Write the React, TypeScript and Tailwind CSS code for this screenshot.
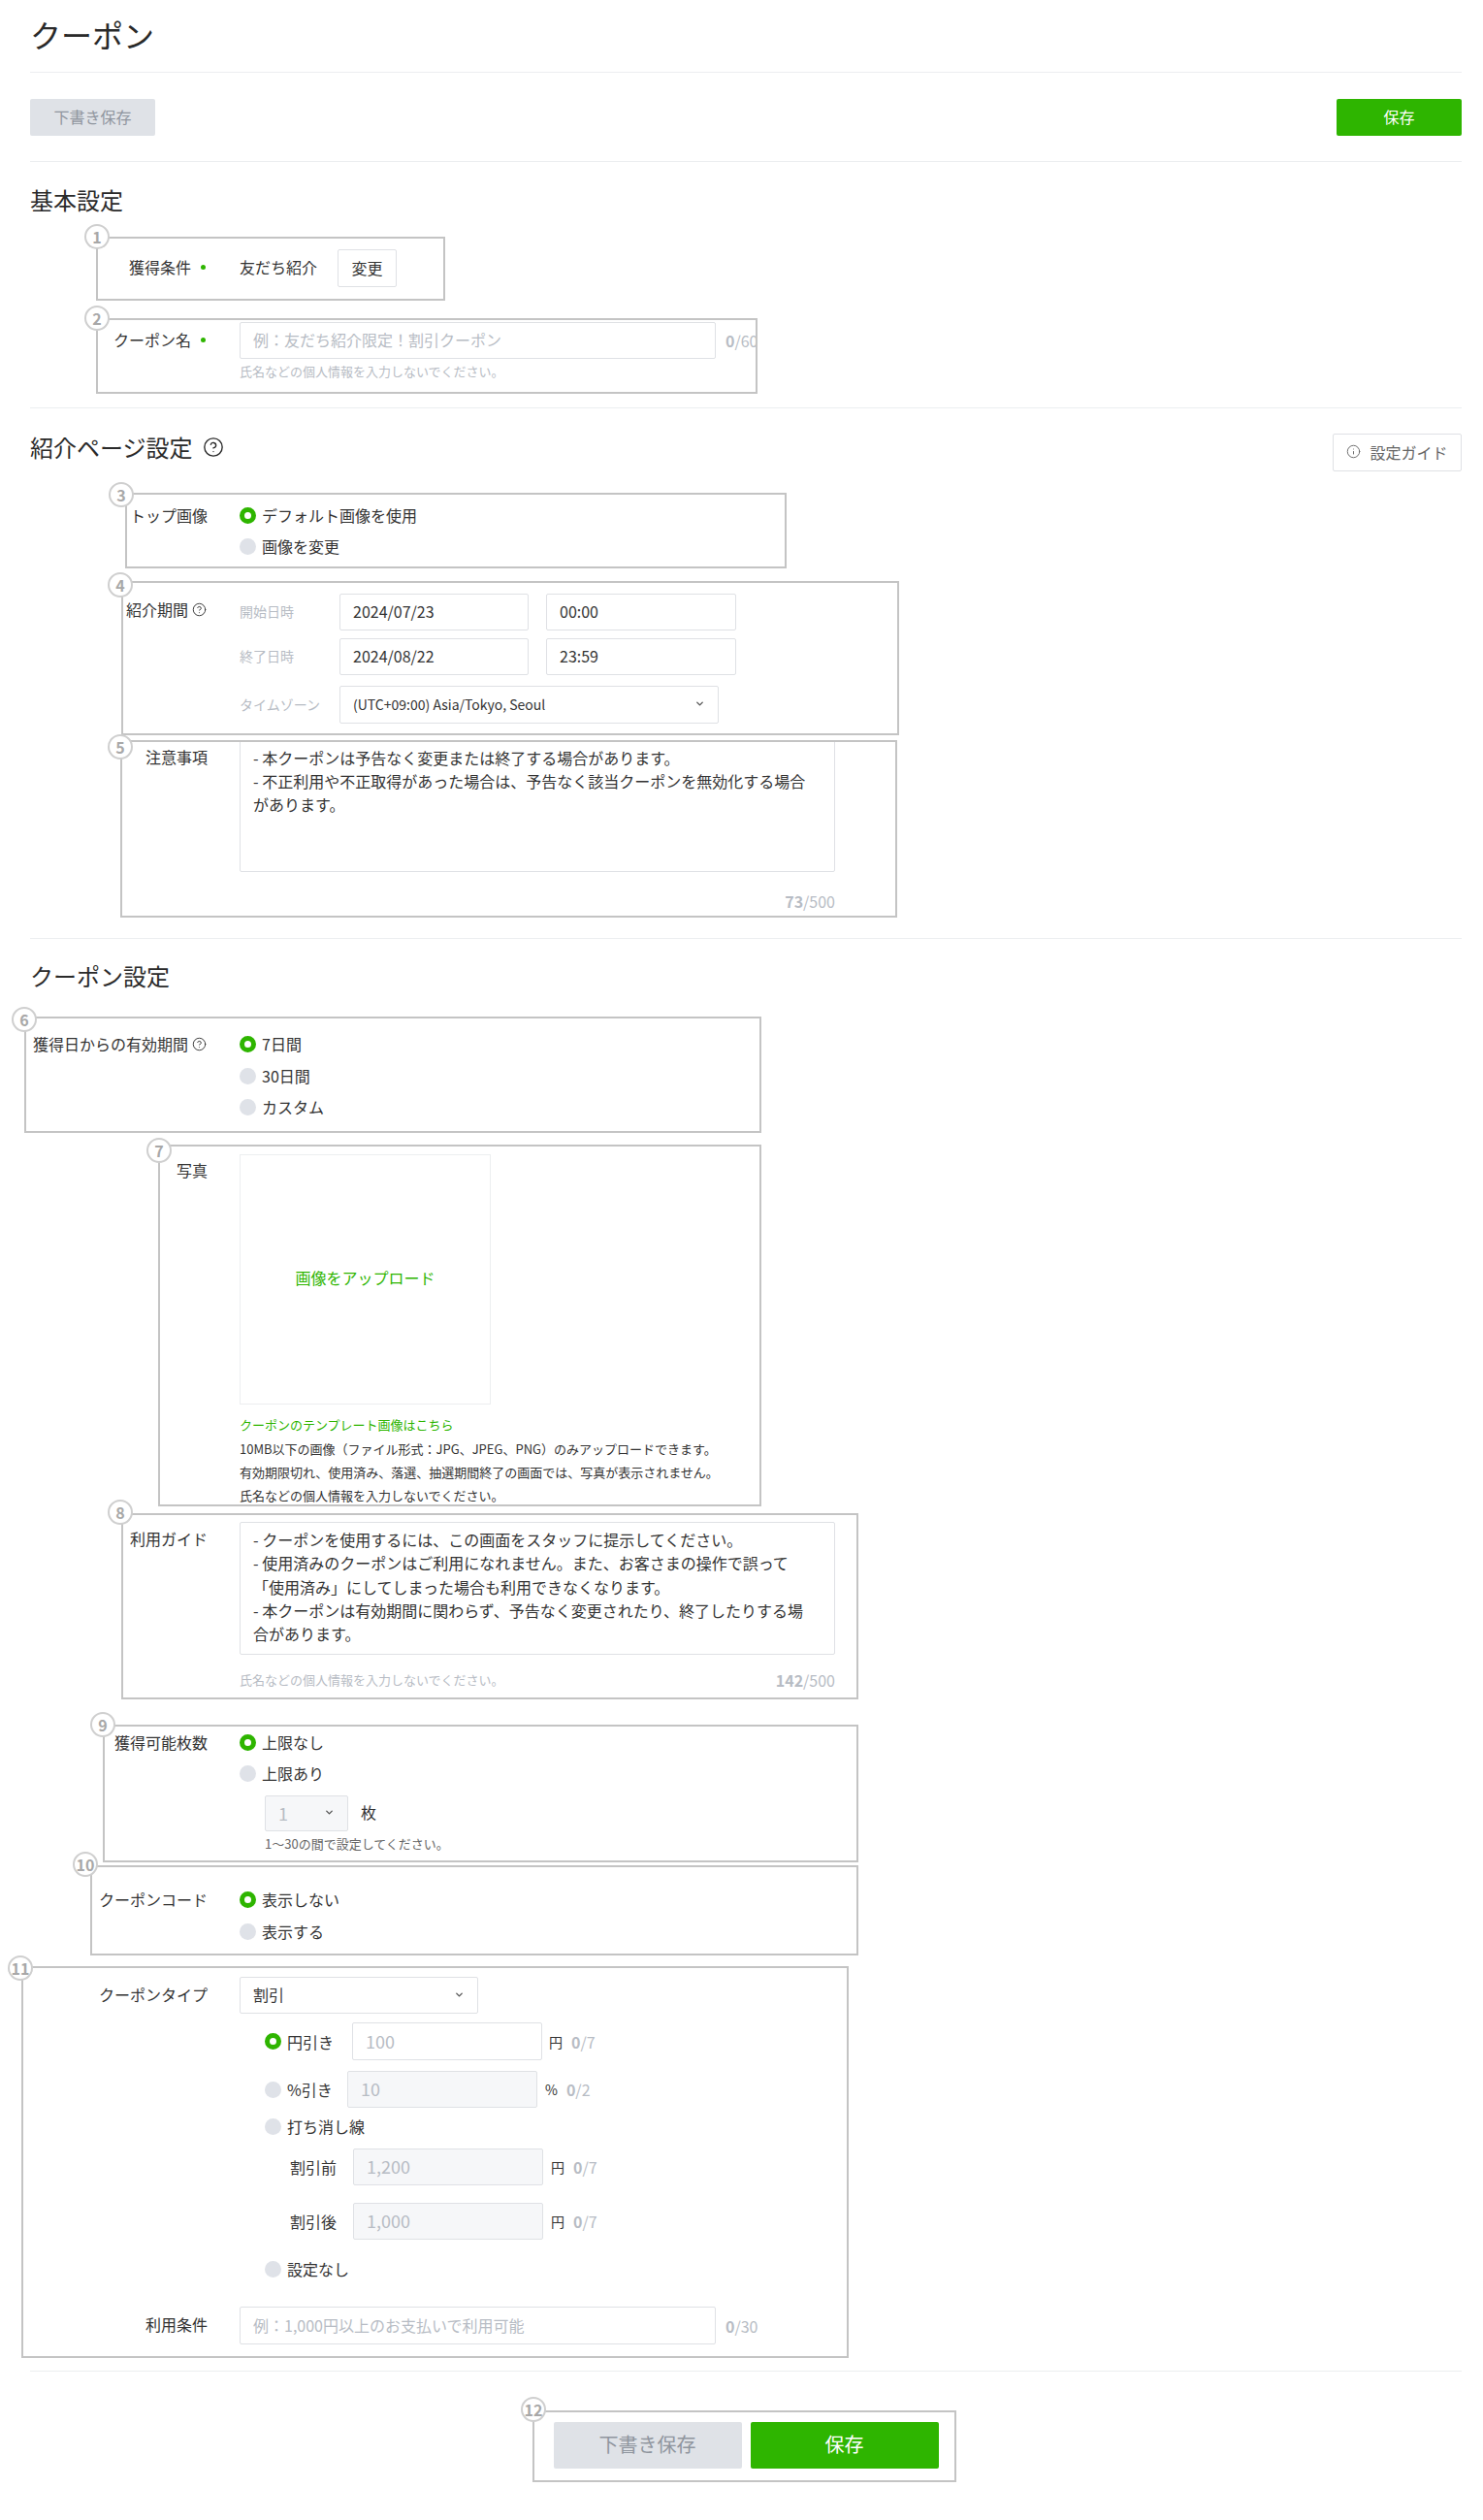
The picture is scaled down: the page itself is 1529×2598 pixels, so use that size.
import React from 'react';
import { ChevronDown, CircleHelp, Info } from 'lucide-react';

const frames = [
  { n: 1, frame: 'left-[99px] top-[244px] w-[360px] h-[66px]', badge: 'left-[87px] top-[231px]' },
  { n: 2, frame: 'left-[99px] top-[328px] w-[682px] h-[78px]', badge: 'left-[87px] top-[315px]' },
  { n: 3, frame: 'left-[129px] top-[508px] w-[682px] h-[78px]', badge: 'left-[112px] top-[497px]' },
  { n: 4, frame: 'left-[125px] top-[599px] w-[802px] h-[159px]', badge: 'left-[111px] top-[590px]' },
  { n: 5, frame: 'left-[124px] top-[763px] w-[801px] h-[183px]', badge: 'left-[111px] top-[757px]' },
  { n: 6, frame: 'left-[25px] top-[1048px] w-[760px] h-[120px]', badge: 'left-[12px] top-[1038px]' },
  { n: 7, frame: 'left-[163px] top-[1180px] w-[622px] h-[373px]', badge: 'left-[151px] top-[1173px]' },
  { n: 8, frame: 'left-[125px] top-[1560px] w-[760px] h-[192px]', badge: 'left-[111px] top-[1546px]' },
  { n: 9, frame: 'left-[106px] top-[1778px] w-[779px] h-[142px]', badge: 'left-[93px] top-[1765px]' },
  { n: 10, frame: 'left-[93px] top-[1923px] w-[792px] h-[93px]', badge: 'left-[75px] top-[1909px]' },
  { n: 11, frame: 'left-[22px] top-[2027px] w-[853px] h-[404px]', badge: 'left-[8px] top-[2016px]' },
  { n: 12, frame: 'left-[549px] top-[2485px] w-[437px] h-[74px]', badge: 'left-[537px] top-[2471px]' },
];

const Divider = ({ className }: { className: string }) => <div className={`h-px bg-[#eceef0] ${className}`} />;

const Heading = ({ children, className }: { children: React.ReactNode; className: string }) => (
  <h2 className={`h-8 text-2xl leading-[30px] text-[#2a2a2a] ${className}`}>{children}</h2>
);

const Dot = () => <span className="ml-[10px] mr-[2px] h-[5px] w-[5px] rounded-full bg-[#2eb500]" />;

const Label = ({ children, className = '' }: { children: React.ReactNode; className?: string }) => (
  <div className={`flex w-[183px] shrink-0 justify-end text-base leading-6 ${className}`}>{children}</div>
);

const Box = ({ children, className, muted }: { children?: React.ReactNode; className: string; muted?: boolean }) => (
  <div
    className={`box-border flex shrink-0 items-center rounded-[2px] border border-[#dfe1e5] px-[13px] pb-[2px] text-base ${
      muted ? 'bg-[#f6f7f9]' : 'bg-white'
    } ${className}`}
  >
    {children}
  </div>
);

const Select = ({ children, className, muted }: { children: React.ReactNode; className: string; muted?: boolean }) => (
  <Box className={`justify-between ${className}`} muted={muted}>
    {children}
    <ChevronDown size={11} strokeWidth={3} className="text-[#555]" />
  </Box>
);

const Radio = ({ checked, children, className = '' }: { checked?: boolean; children: React.ReactNode; className?: string }) => (
  <div className={`flex h-6 items-center text-base ${className}`}>
    <span
      className={`mr-[6px] box-border h-[17px] w-[17px] shrink-0 rounded-full ${
        checked ? 'border-[5px] border-[#2eb500] bg-white' : 'bg-[#dfe2e8]'
      }`}
    />
    {children}
  </div>
);

const Count = ({ value, max, className = '' }: { value: string; max: string; className?: string }) => (
  <span className={`text-[#b7bcc4] ${className}`}>
    <b>{value}</b>/{max}
  </span>
);

const Hint = ({ children, className = '' }: { children: React.ReactNode; className?: string }) => (
  <p className={`text-[13px] leading-5 text-[#b7bcc4] ${className}`}>{children}</p>
);

const Field = ({ className = '', children }: { className?: string; children: React.ReactNode }) => (
  <div className={`ml-[33px] ${className}`}>{children}</div>
);

const Yen = ({ className }: { className: string }) => (
  <>
    <span className={`text-sm ${className}`}>円</span>
    <Count value="0" max="7" className="ml-[9px]" />
  </>
);

export default function App() {
  return (
    <div className="relative h-[2598px] w-[1529px] bg-white pl-[31px] pr-[22px] font-['Noto_Sans_CJK_JP','Liberation_Sans',sans-serif] text-[#333]">
      <header className="box-border h-[75px] border-b border-[#eceef0] pt-[11px]">
        <h1 className="text-[32px] leading-[48px] text-[#2a2a2a]">クーポン</h1>
      </header>

      <div className="box-border flex h-[92px] justify-between border-b border-[#eceef0] pt-[27px]">
        <button className="h-[38px] w-[129px] rounded-[2px] bg-[#dfe2e7] pb-[2px] text-base text-[#8f959e]">下書き保存</button>
        <button className="h-[38px] w-[129px] rounded-[2px] bg-[#2eb500] pb-[2px] text-base text-white">保存</button>
      </div>

      <Heading className="mt-6">基本設定</Heading>
      <div className="mt-[34px] flex items-center">
        <Label className="items-center pb-[3px]">獲得条件<Dot /></Label>
        <Field className="flex items-center">
          <span className="pb-[3px] text-base">友だち紹介</span>
          <button className="ml-[21px] h-[39px] w-[61px] rounded-[2px] border border-[#dfe1e5] pb-[2px] text-base">変更</button>
        </Field>
      </div>
      <div className="mt-[36px] flex">
        <Label className="h-9 items-center">クーポン名<Dot /></Label>
        <Field>
          <div className="flex items-center">
            <Box className="h-[38px] w-[491px] text-[#b7bcc4]">{'例\uFF1A友だち紹介限定\uFF01割引クーポン'}</Box>
            <Count value="0" max="60" className="ml-[10px]" />
          </div>
          <Hint className="mt-[3px]">氏名などの個人情報を入力しないでください。</Hint>
        </Field>
      </div>
      <Divider className="mt-[27px]" />

      <div className="mt-6 flex items-start justify-between">
        <Heading className="flex items-center">
          紹介ページ設定
          <CircleHelp size={22} strokeWidth={1.5} className="ml-[10px]" />
        </Heading>
        <button className="mt-[2px] flex h-[39px] w-[133px] items-center justify-center rounded-[2px] border border-[#dfe1e5] pb-[2px] text-base text-[#666]">
          <Info size={15} strokeWidth={1.5} className="mr-[9px]" />
          設定ガイド
        </button>
      </div>

      <div className="mt-[33px] flex">
        <Label>トップ画像</Label>
        <Field>
          <Radio checked>デフォルト画像を使用</Radio>
          <Radio className="mt-2">画像を変更</Radio>
        </Field>
      </div>

      <div className="mt-[37px] flex">
        <Label className="h-fit items-center pt-[4px]">
          紹介期間
          <CircleHelp size={15} strokeWidth={1.5} className="ml-[4px] mr-[1px]" />
        </Label>
        <Field>
          <div className="flex items-center">
            <span className="w-[103px] pb-[2px] text-sm text-[#b7bcc4]">開始日時</span>
            <Box className="h-[38px] w-[195px]">2024/07/23</Box>
            <Box className="ml-[18px] h-[38px] w-[196px]">00:00</Box>
          </div>
          <div className="mt-2 flex items-center">
            <span className="w-[103px] pb-[2px] text-sm text-[#b7bcc4]">終了日時</span>
            <Box className="h-[38px] w-[195px]">2024/08/22</Box>
            <Box className="ml-[18px] h-[38px] w-[196px]">23:59</Box>
          </div>
          <div className="mt-[11px] flex items-center">
            <span className="w-[103px] pb-[2px] text-sm text-[#b7bcc4]">タイムゾーン</span>
            <Select className="h-[39px] w-[391px] text-sm">(UTC+09:00) Asia/Tokyo, Seoul</Select>
          </div>
        </Field>
      </div>

      <div className="mt-[17px] flex">
        <Label className="pt-[5px]">注意事項</Label>
        <Field>
          <div className="box-border h-[136px] w-[614px] rounded-[2px] border border-[#dfe1e5] px-[13px] pt-[5px] text-base leading-6">
            <p>- 本クーポンは予告なく変更または終了する場合があります。</p>
            <p>- 不正利用や不正取得があった場合は、予告なく該当クーポンを無効化する場合</p>
            <p>があります。</p>
          </div>
          <div className="mt-5 text-right leading-5">
            <Count value="73" max="500" />
          </div>
        </Field>
      </div>
      <Divider className="mt-7" />

      <Heading className="mt-[23px]">クーポン設定</Heading>
      <div className="mt-[41px] flex">
        <Label className="h-6 items-center">
          獲得日からの有効期間
          <CircleHelp size={15} strokeWidth={1.5} className="ml-[4px] mr-[1px]" />
        </Label>
        <Field>
          <Radio checked>7日間</Radio>
          <Radio className="mt-[9px]">30日間</Radio>
          <Radio className="mt-2">カスタム</Radio>
        </Field>
      </div>

      <div className="mt-[37px] flex">
        <Label className="pt-[4px]">写真</Label>
        <Field>
          <div className="box-border flex h-[258px] w-[259px] items-center justify-center border border-[#eceef0] pb-[5px] text-base text-[#2eb500]">
            画像をアップロード
          </div>
          <p className="mt-[9px] text-[13px] leading-6 text-[#2eb500]">クーポンのテンプレート画像はこちら</p>
          <div className="mt-px text-[13px] leading-6">
            <p>{'10MB以下の画像\uFF08ファイル形式\uFF1AJPG、JPEG、PNG\uFF09のみアップロードできます。'}</p>
            <p>有効期限切れ、使用済み、落選、抽選期間終了の画面では、写真が表示されません。</p>
            <p>氏名などの個人情報を入力しないでください。</p>
          </div>
        </Field>
      </div>

      <div className="mt-[15px] flex">
        <Label className="pt-[5px]">利用ガイド</Label>
        <Field>
          <div className="box-border h-[137px] w-[614px] rounded-[2px] border border-[#dfe1e5] px-[13px] pt-[5px] text-base leading-[24.3px]">
            <p>- クーポンを使用するには、この画面をスタッフに提示してください。</p>
            <p>- 使用済みのクーポンはご利用になれません。また、お客さまの操作で誤って</p>
            <p>「使用済み」にしてしまった場合も利用できなくなります。</p>
            <p>- 本クーポンは有効期間に関わらず、予告なく変更されたり、終了したりする場</p>
            <p>合があります。</p>
          </div>
          <div className="mt-4 flex h-5 items-start justify-between leading-5">
            <Hint>氏名などの個人情報を入力しないでください。</Hint>
            <Count value="142" max="500" />
          </div>
        </Field>
      </div>

      <div className="mt-[42px] flex">
        <Label>獲得可能枚数</Label>
        <Field>
          <Radio checked>上限なし</Radio>
          <Radio className="mt-2">上限あり</Radio>
          <div className="ml-[26px] mt-[11px] flex items-center">
            <Select muted className="h-[37px] w-[86px] text-lg text-[#b7bcc4]">1</Select>
            <span className="ml-[13px] pb-[3px] text-base">枚</span>
          </div>
          <Hint className="ml-[26px] mt-[3px] !text-[#666]">1〜30の間で設定してください。</Hint>
        </Field>
      </div>

      <div className="mt-[35px] flex">
        <Label>クーポンコード</Label>
        <Field>
          <Radio checked>表示しない</Radio>
          <Radio className="mt-[9px]">表示する</Radio>
        </Field>
      </div>

      <div className="mt-[35px] flex">
        <Label className="pt-[6px]">クーポンタイプ</Label>
        <Field>
          <Select className="h-[38px] w-[246px]">割引</Select>
          <div className="ml-[26px] mt-[9px] flex items-center">
            <Radio checked className="w-[90px]">円引き</Radio>
            <Box className="h-[39px] w-[196px] text-lg text-[#b7bcc4]">100</Box>
            <Yen className="ml-[7px]" />
          </div>
          <div className="ml-[26px] mt-[11px] flex items-center">
            <Radio className="w-[85px]">%引き</Radio>
            <Box muted className="h-[38px] w-[196px] text-lg text-[#b7bcc4]">10</Box>
            <span className="ml-[8px] text-sm">%</span>
            <Count value="0" max="2" className="ml-[9px]" />
          </div>
          <Radio className="ml-[26px] mt-[7px]">打ち消し線</Radio>
          <div className="ml-[52px] mt-[11px] flex items-center">
            <span className="w-[65px] text-base">割引前</span>
            <Box muted className="h-[38px] w-[196px] text-lg text-[#b7bcc4]">1,200</Box>
            <Yen className="ml-[8px]" />
          </div>
          <div className="ml-[52px] mt-[18px] flex items-center">
            <span className="w-[65px] text-base">割引後</span>
            <Box muted className="h-[38px] w-[196px] text-lg text-[#b7bcc4]">1,000</Box>
            <Yen className="ml-[8px]" />
          </div>
          <Radio className="ml-[26px] mt-[18px]">設定なし</Radio>
        </Field>
      </div>

      <div className="mt-[27px] flex items-center">
        <Label className="pb-[3px]">利用条件</Label>
        <Field className="flex items-center">
          <Box className="h-[39px] w-[491px] text-[#b7bcc4]">{'例\uFF1A1,000円以上のお支払いで利用可能'}</Box>
          <Count value="0" max="30" className="ml-[10px]" />
        </Field>
      </div>
      <Divider className="mt-[27px]" />

      <div className="mt-[52px] flex justify-center gap-[9px]">
        <button className="h-12 w-[194px] rounded-[2px] bg-[#dfe2e7] pb-[2px] text-xl text-[#8f959e]">下書き保存</button>
        <button className="h-12 w-[194px] rounded-[2px] bg-[#2eb500] pb-[2px] text-xl text-white">保存</button>
      </div>

      {/* numbered annotation frames drawn over the form */}
      {frames.map((f) => (
        <React.Fragment key={f.n}>
          <div className={`pointer-events-none absolute box-border border-2 border-[#c4c4c4] ${f.frame}`} />
          <div
            className={`absolute box-border flex h-[26px] w-[26px] items-center justify-center rounded-full border-2 border-[#cfcfcf] bg-white text-base font-bold text-[#a8a8a8] ${f.badge}`}
          >
            {f.n}
          </div>
        </React.Fragment>
      ))}
    </div>
  );
}
